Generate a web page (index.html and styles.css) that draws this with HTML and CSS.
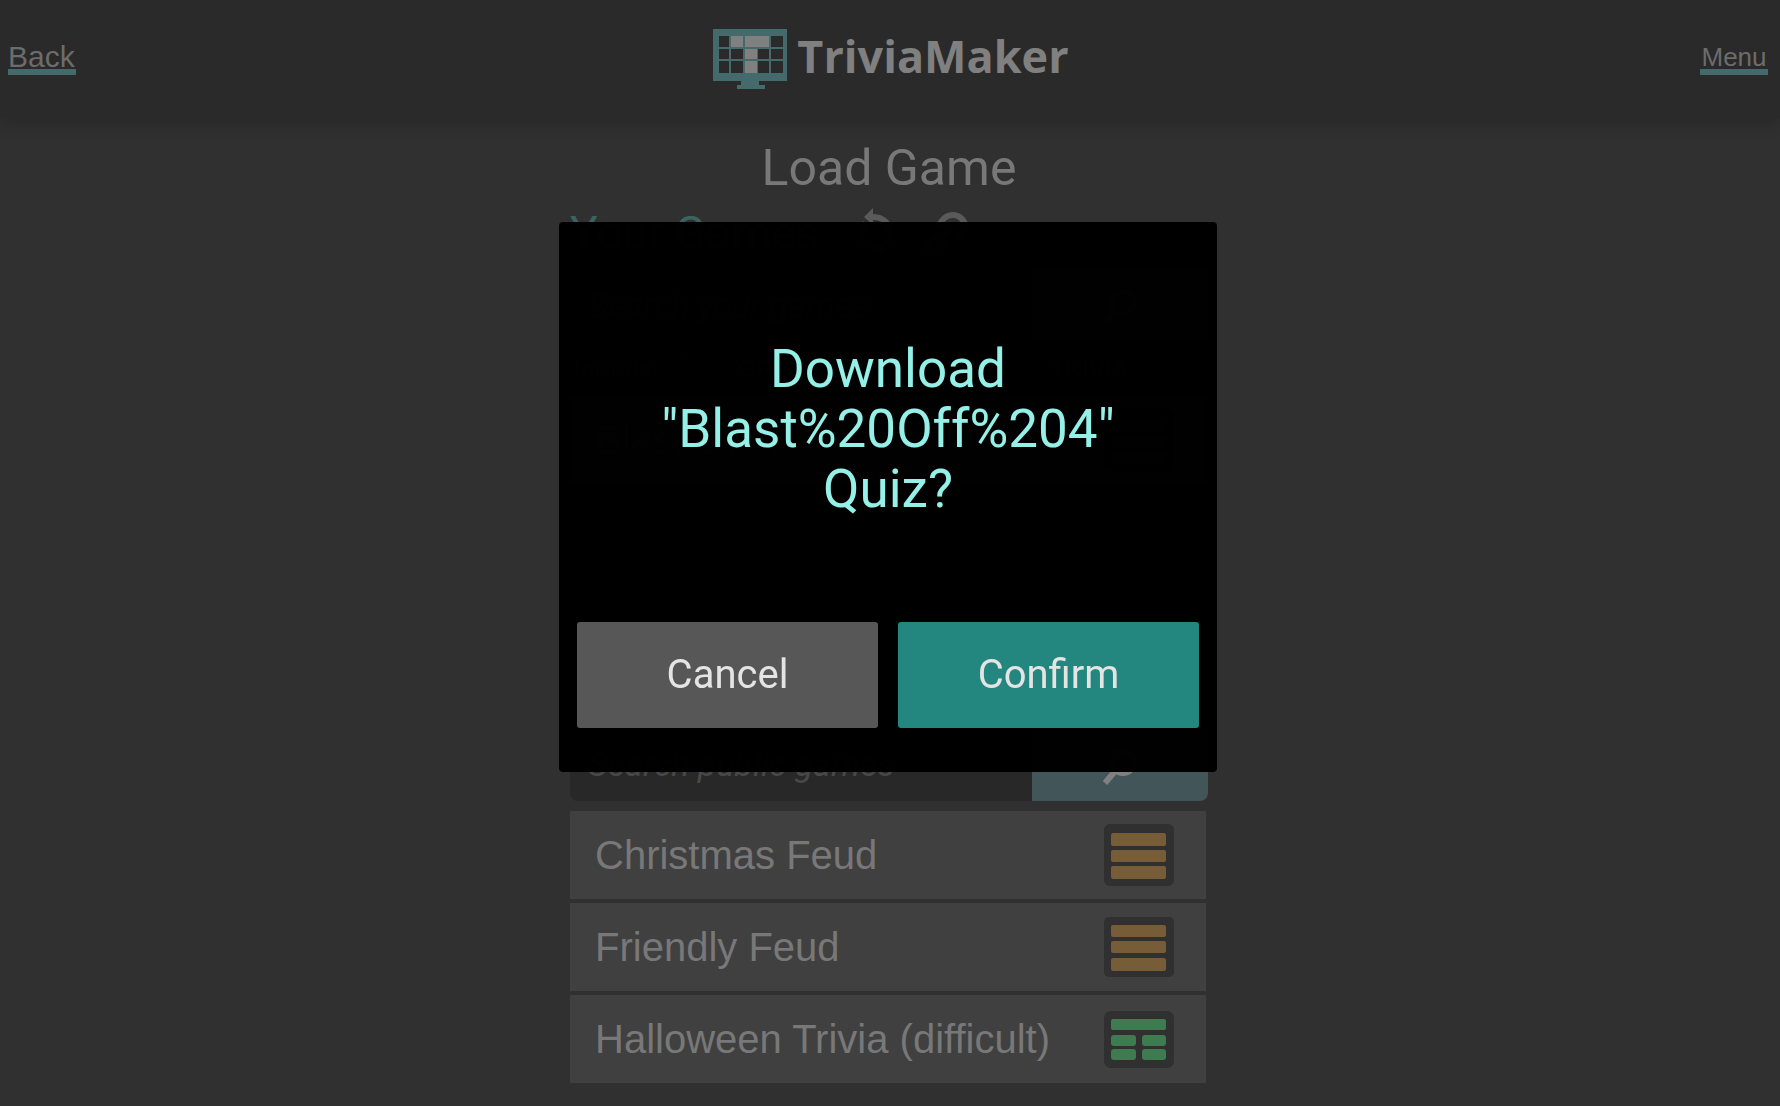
FILE: index.html
```html
<!DOCTYPE html>
<html lang="en">
<head>
<meta charset="utf-8">
<title>TriviaMaker - Load Game</title>
<link rel="stylesheet" href="styles.css">
</head>
<body>
<header class="topbar">
  <a class="nav-link nav-back" href="#back">Back</a>
  <div class="logo">
    <svg class="logo-mark" width="74" height="60" viewBox="0 0 74 60" aria-hidden="true">
      <path fill="#456a6b" d="M0 0h74v52H46v4h6v4H24v-4h4v-4H0z"/>
      <path fill="#2a2a2a" d="M6 7h10v11H6zM58 7h12v11H58zM6 20h10v10H6zM18 20h12v10H18zM45 20h11v10H45zM58 20h12v10H58zM6 32h10v12H6zM18 32h12v12H18zM45 32h11v12H45zM58 32h12v12H58z"/>
      <path fill="#808080" d="M18 7h12v11H18zM32 7h24v11H32zM32 20h12v10H32zM32 32h12v12H32z"/>
    </svg>
    <span class="logo-text">TriviaMaker</span>
  </div>
  <a class="nav-link nav-menu" href="#menu">Menu</a>
</header>
<main class="page">
  <h1 class="title">Load Game</h1>
  <section class="games">
    <div class="section-head">
      <h2 class="section-title">Your Games</h2>
      <div class="tools">
        <button class="icon-btn" aria-label="Refresh"><svg width="40" height="50" viewBox="0 0 40 50"><path d="M17 0v6C30 6 37 15 37 25c0 5-2 9-4 12l-4-4c2-2 3-5 3-8 0-7-5-13-15-13v5L8 9zM23 50v-7C10 43 3 35 3 25c0-5 2-9 4-12l4 4c-2 2-3 5-3 8 0 7 5 13 15 13v-5l9 8z"/></svg></button>
        <button class="icon-btn" aria-label="Share link"><svg width="50" height="50" viewBox="0 0 50 50"><path fill="none" stroke="currentColor" stroke-width="6" d="M17 26l-6 6c-8 8 2 18 10 10l8-8M19 19c2-8 8-12 14-12s12 5 12 11c0 6-5 10-10 14M18 32l14-14"/></svg></button>
      </div>
    </div>
    <form class="search">
      <input class="search-input" type="text" aria-label="Search your games" placeholder="Search your games">
      <button class="search-btn" type="button" aria-label="Search"><svg width="36" height="44" viewBox="0 0 36 44"><circle cx="21" cy="21" r="11"/><path d="M14 29L3 42"/></svg></button>
    </form>
    <div class="filters">
      <span>Include:</span>
      <label><input class="check" type="checkbox">GRID</label>
      <label><input class="check" type="checkbox">TRIVIA</label>
    </div>
    <ul class="list own">
      <li class="row"><a class="row-link" href="#blast">Blast Off 4</a>
        <svg class="kind" width="70" height="62" viewBox="0 0 70 62"><rect width="70" height="62" rx="6" fill="#303030"/><g fill="#775c38"><rect x="7" y="9" width="55" height="13" rx="2"/><rect x="7" y="26" width="55" height="12" rx="2"/><rect x="7" y="42" width="55" height="13" rx="2"/></g></svg></li>
    </ul>
  </section>
  <section class="games">
    <form class="search">
      <input class="search-input" type="text" aria-label="Search public games" placeholder="Search public games">
      <button class="search-btn" type="button" aria-label="Search"><svg width="36" height="44" viewBox="0 0 36 44"><circle cx="21" cy="21" r="11"/><path d="M14 29L3 42"/></svg></button>
    </form>
    <ul class="list">
      <li class="row"><a class="row-link" href="#christmas">Christmas Feud</a>
        <svg class="kind" width="70" height="62" viewBox="0 0 70 62"><rect width="70" height="62" rx="6" fill="#303030"/><g fill="#775c38"><rect x="7" y="9" width="55" height="13" rx="2"/><rect x="7" y="26" width="55" height="12" rx="2"/><rect x="7" y="42" width="55" height="13" rx="2"/></g></svg></li>
      <li class="row"><a class="row-link" href="#friendly">Friendly Feud</a>
        <svg class="kind" width="70" height="60" viewBox="0 0 70 60"><rect width="70" height="60" rx="5" fill="#303030"/><g fill="#775c38"><rect x="7" y="8" width="55" height="12" rx="2"/><rect x="7" y="24" width="55" height="12" rx="2"/><rect x="7" y="41" width="55" height="13" rx="2"/></g></svg></li>
      <li class="row"><a class="row-link" href="#halloween">Halloween Trivia (difficult)</a>
        <svg class="kind" width="70" height="57" viewBox="0 0 70 57"><rect width="70" height="57" rx="7" fill="#303030"/><g fill="#3f7b50"><rect x="7" y="8" width="55" height="11" rx="2"/><rect x="7" y="24" width="25" height="11" rx="3"/><rect x="38" y="24" width="24" height="11" rx="3"/><rect x="7" y="38" width="25" height="11" rx="3"/><rect x="38" y="38" width="24" height="11" rx="3"/></g></svg></li>
    </ul>
  </section>
</main>
<div class="dialog" role="dialog" aria-modal="true" aria-labelledby="dialog-text">
  <p class="dialog-text" id="dialog-text">Download<br>"Blast%20Off%204"<br>Quiz?</p>
  <div class="actions">
    <button class="btn btn-cancel">Cancel</button>
    <button class="btn btn-confirm">Confirm</button>
  </div>
</div>
</body>
</html>
```

FILE: styles.css
```css
* { box-sizing: border-box; }

body {
  margin: 0;
  min-height: 100vh;
  background: #303030;
  color: #787878;
  font-family: "Liberation Sans", Arial, sans-serif;
}

.topbar {
  display: grid;
  grid-template-columns: 1fr auto 1fr;
  align-items: center;
  height: 118px;
  padding: 0 12px 0 8px;
  background: #2a2a2a;
  box-shadow: 0 4px 16px rgba(0, 0, 0, 0.2);
}

.nav-link {
  width: 68px;
  height: 32px;
  border-bottom: 6px solid #456a6b;
  color: #6c6c6c;
  line-height: 28px;
  text-decoration: none;
}
.nav-back { font-size: 30px; }
.nav-menu { justify-self: end; font-size: 26px; text-align: center; }

.logo { display: flex; align-items: center; gap: 10px; padding-left: 6px; }
.logo-mark { display: block; }
.logo-text {
  padding-bottom: 6px;
  color: #808080;
  font: 700 45px/54px "Open Sans", sans-serif;
}

.page {
  width: 640px;
  max-width: 100%;
  margin: 0 auto;
  padding-right: 2px;
}

.title {
  margin: 0;
  padding-top: 20px;
  font: 400 50px/60px Roboto, sans-serif;
  text-align: center;
}

.section-head { display: flex; align-items: center; gap: 36px; height: 70px; }
.section-title { margin: 0; color: #3c6261; font: 400 46px/60px Roboto, sans-serif; }
.tools { display: flex; gap: 24px; }

.icon-btn { padding: 0; border: 0; background: none; color: #5a5a5a; }
.icon-btn svg { display: block; fill: currentColor; }

.search { display: flex; height: 74px; }
.search-input {
  flex: 1;
  min-width: 0;
  padding: 0 18px;
  border: 0;
  border-radius: 8px 0 0 8px;
  background: #282828;
  color: #787878;
  font: italic 34px/40px Roboto, sans-serif;
}
.search-input::placeholder { color: #484848; opacity: 1; }
.search-btn {
  width: 176px;
  padding: 0;
  border: 0;
  border-radius: 0 8px 8px 0;
  background: #425558;
}
.search-btn svg { fill: none; stroke: #808080; stroke-width: 6px; }

.filters {
  display: grid;
  grid-template-columns: 106px 1fr 216px;
  align-items: center;
  height: 54px;
  padding-left: 4px;
  color: #484848;
  font-size: 24px;
}
.filters label { display: flex; align-items: center; gap: 24px; }
.check { appearance: none; width: 34px; height: 34px; margin: 0; border: 1px solid #404040; }

.list {
  display: flex;
  flex-direction: column;
  gap: 4px;
  margin: 10px 2px 0 0;
  padding: 0;
  list-style: none;
}
.own { min-height: 331px; margin-top: 0; }
.row {
  display: flex;
  align-items: center;
  justify-content: space-between;
  height: 88px;
  padding: 0 32px 0 25px;
  background: #404040;
}
.row-link { color: #787878; font-size: 40px; line-height: 48px; text-decoration: none; }

.dialog {
  position: fixed;
  top: 222px;
  left: 50%;
  width: 658px;
  max-width: 100%;
  margin-left: -331px;
  padding: 117px 18px 44px;
  display: flex;
  flex-direction: column;
  gap: 103px;
  border-radius: 4px;
  background: rgba(0, 0, 0, 0.985);
}
.dialog-text {
  margin: 0;
  color: #95f0e8;
  font: 400 53px/60px Roboto, sans-serif;
  text-align: center;
}
.actions { display: flex; gap: 20px; }
.btn {
  flex: 1;
  height: 106px;
  padding: 0;
  border: 0;
  border-radius: 3px;
  color: #e4e4e4;
  font: 400 40px/48px Roboto, sans-serif;
}
.btn-cancel { background: #575757; }
.btn-confirm { background: #24877f; }
```
